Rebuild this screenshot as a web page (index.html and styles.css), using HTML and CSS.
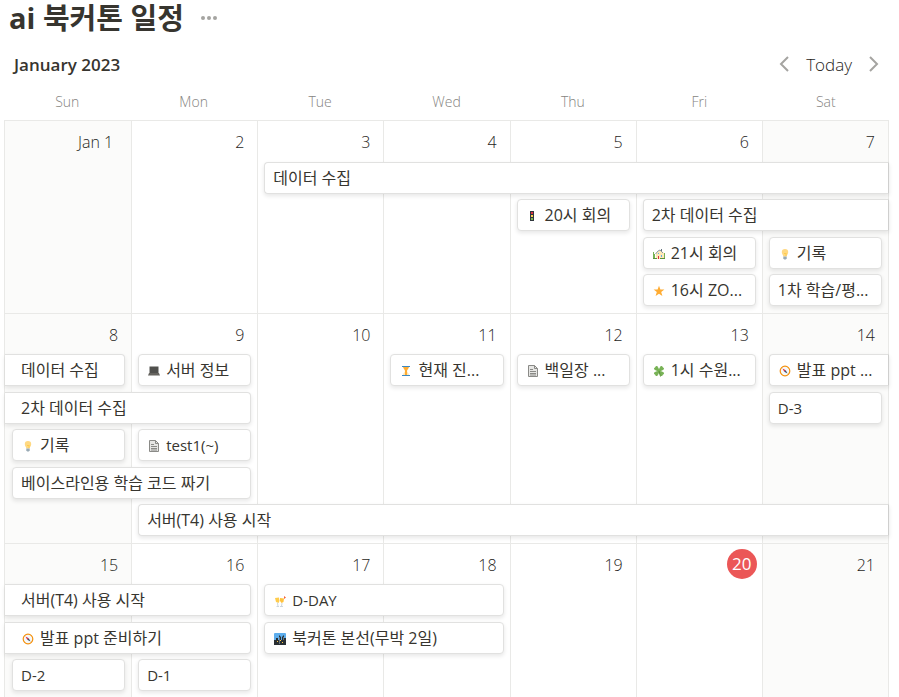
FILE: index.html
```html
<!DOCTYPE html>
<html lang="ko">
<head>
    <meta charset="UTF-8">
    <meta name="viewport" content="width=device-width, initial-scale=1.0">
    <title>ai 북커톤 일정</title>
    <link rel="stylesheet" href="styles.css">
</head>
<body>
    <!-- card icons -->
    <svg class="sprite" aria-hidden="true">
        <symbol id="light" viewBox="0 0 12 12">
            <rect x="3" y="1" width="4" height="10" fill="#31373d"/>
            <rect x="4" y="2" width="2" height="2" fill="#dd2e44"/>
            <rect x="4" y="5" width="2" height="2" fill="#ffcc4d"/>
            <rect x="4" y="8" width="2" height="2" fill="#77b255"/>
        </symbol>
        <symbol id="house" viewBox="0 0 12 12">
            <path d="M3 11V5l4-3 4 3v6z" fill="#ffe8b6"/>
            <path d="M2.5 6L5 3l2-1 3 3" fill="none" stroke="#8b9aa3"/>
            <path d="M0 4h1v2h1v4H0zM11 5h1v5h-1z" fill="#77b255"/>
            <rect x="8" y="1" width="1" height="2" fill="#66757f"/>
            <rect x="5" y="8" width="1" height="3" fill="#dd2e44"/>
            <rect x="8" y="7" width="1" height="2" fill="#5dadec"/>
            <rect x="5" y="5" width="1" height="1" fill="#5dadec"/>
            <path d="M0 10h4v1H0zM7 10h5v1H7z" fill="#5c913b"/>
        </symbol>
        <symbol id="star" viewBox="0 0 12 12">
            <path d="M6 .8l1.400 3.800h4L8.200 7l1.200 4L6 8.700 2.600 11l1.200-4L.6 4.600h4z" fill="#ffac33"/>
        </symbol>
        <symbol id="bulb" viewBox="0 0 12 12">
            <path d="M6 1a3.200 3.200 0 0 1 3.200 3.300C9.200 6.200 7.800 6.800 7.700 8.500H4.300C4.200 6.800 2.800 6.200 2.800 4.300A3.200 3.200 0 0 1 6 1z" fill="#ffd983"/>
            <path d="M5 5l1 1 1-1v3" fill="none" stroke="#ffcc4d"/>
            <path d="M4.300 8.500h3.400v2l-.9 1H5.200l-.9-1z" fill="#99aab5"/>
        </symbol>
        <symbol id="laptop" viewBox="0 0 12 12">
            <path d="M1.500 1.500h9V8h-9z" fill="#50504d"/>
            <path d="M1 8h10l1 2.500H0z" fill="#66645f"/>
        </symbol>
        <symbol id="doc" viewBox="0 0 12 12">
            <path d="M1.500.5h6l3 3v8h-9z" fill="#e6e6e4" stroke="#8a8a87"/>
            <path d="M7.500.5v3h3M3 4.500h3M3 6.500h6M3 8.500h6M3 10h6" fill="none" stroke="#8a8a87"/>
        </symbol>
        <symbol id="hourglass" viewBox="0 0 12 12">
            <path d="M3 2h6c0 2-2 3-2 4s2 2 2 4H3c0-2 2-3 2-4S3 4 3 2z" fill="#ffe8b6"/>
            <path d="M3 2h6L7 5.500V10H5V5.500z" fill="#ffac33"/>
            <path d="M2 1h8v1H2zM2 10h8v1H2z" fill="#3b88c3"/>
        </symbol>
        <symbol id="clover" viewBox="0 0 12 12">
            <path d="M6 6C5 4 3 .5 5.500 1L6 2l.5-1C9 .5 7 4 6 6c2-1 5.500-3 5-.5L10 6l1 .5C11.500 9 8 7 6 6c1 2 3 5.500.5 5L6 10l-.5 1C3 11.500 5 8 6 6 4 7 .5 9 1 6.500L2 6l-1-.5C.5 3 4 5 6 6z" fill="#77b255" stroke="#77b255" transform="rotate(45 6 6)"/>
            <path d="M6 6l1.500 5.500" stroke="#5c913b"/>
        </symbol>
        <symbol id="compass" viewBox="0 0 12 12">
            <circle cx="6" cy="6" r="4.800" fill="#f5f8fa" stroke="#f4900c" stroke-width="1.200"/>
            <path d="M3.500 3.500l3.300 1.700-1.600 1.600z" fill="#dd2e44"/>
            <path d="M8.500 8.500L5.200 6.800l1.600-1.600z" fill="#3b4f66"/>
        </symbol>
        <symbol id="glasses" viewBox="0 0 12 12">
            <path d="M1 3l4-.5.5 3.500-1 2L2 7z" fill="#ffcc4d"/>
            <path d="M6 3l4 .5-.5 3.500-2 1L6 6z" fill="#ffc23d"/>
            <path d="M3.500 7.500l.5 4M2.500 11.500H5M8 8l-.5 3.500M6 11.500h3" fill="none" stroke="#ccd6dd"/>
            <path d="M10 1l2 1.500L10 4z" fill="#f4633a"/>
        </symbol>
        <symbol id="city" viewBox="0 0 12 12">
            <rect x="0" y="0" width="12" height="12" rx="1" fill="#5dadec"/>
            <path d="M0 11V7h2V5h2v2h1V2l2 2v3h1V4l2-2v3h2v7H0z" fill="#292f33"/>
            <path d="M5 4h1v7H5zM9 4h1v3H9z" fill="#66757f"/>
            <path d="M3 8h1v1H3zM6 7h1v1H6zM8 9h1v1H8z" fill="#ffcc4d"/>
        </symbol>
    </svg>

    <h1>ai 북커톤 일정 <button type="button" class="more" aria-label="More"><svg viewBox="0 0 18 6"><circle cx="3" cy="3" r="2"/><circle cx="9" cy="3" r="2"/><circle cx="15" cy="3" r="2"/></svg></button></h1>

    <div class="toolbar">
        <h2>January 2023</h2>
        <button type="button" class="arrow" aria-label="Previous month"><svg viewBox="0 0 10 16"><path d="M9 1L2 8l7 7"/></svg></button>
        <button type="button" class="today-btn">Today</button>
        <button type="button" class="arrow" aria-label="Next month"><svg viewBox="0 0 10 16"><path d="M1 1l7 7-7 7"/></svg></button>
    </div>

    <div class="weekdays">
        <span>Sun</span><span>Mon</span><span>Tue</span><span>Wed</span><span>Thu</span><span>Fri</span><span>Sat</span>
    </div>

    <div class="calendar">
        <div class="week week1">
            <div class="day d1 weekend month-start"><time>Jan 1</time></div>
            <div class="day d2"><time>2</time></div>
            <div class="day d3"><time>3</time></div>
            <div class="day d4"><time>4</time></div>
            <div class="day d5"><time>5</time></div>
            <div class="day d6"><time>6</time></div>
            <div class="day d7 weekend"><time>7</time></div>
            <a href="#" class="card r1 d3 span5 to-next">데이터 수집</a>
            <a href="#" class="card r2 d5"><svg><use href="#light"/></svg>20시 회의</a>
            <a href="#" class="card r2 d6 span2 to-next">2차 데이터 수집</a>
            <a href="#" class="card r3 d6"><svg><use href="#house"/></svg>21시 회의</a>
            <a href="#" class="card r3 d7"><svg><use href="#bulb"/></svg>기록</a>
            <a href="#" class="card r4 d6"><svg><use href="#star"/></svg>16시 ZO...</a>
            <a href="#" class="card r4 d7">1차 학습/평...</a>
        </div>

        <div class="week week2">
            <div class="day d1 weekend"><time>8</time></div>
            <div class="day d2"><time>9</time></div>
            <div class="day d3"><time>10</time></div>
            <div class="day d4"><time>11</time></div>
            <div class="day d5"><time>12</time></div>
            <div class="day d6"><time>13</time></div>
            <div class="day d7 weekend"><time>14</time></div>
            <a href="#" class="card r1 d1 from-prev">데이터 수집</a>
            <a href="#" class="card r1 d2"><svg><use href="#laptop"/></svg>서버 정보</a>
            <a href="#" class="card r1 d4"><svg><use href="#hourglass"/></svg>현재 진...</a>
            <a href="#" class="card r1 d5"><svg><use href="#doc"/></svg>백일장 ...</a>
            <a href="#" class="card r1 d6"><svg><use href="#clover"/></svg>1시 수원...</a>
            <a href="#" class="card r1 d7 to-next"><svg><use href="#compass"/></svg>발표 ppt ...</a>
            <a href="#" class="card r2 d1 span2 from-prev">2차 데이터 수집</a>
            <a href="#" class="card r2 d7 latin">D-3</a>
            <a href="#" class="card r3 d1"><svg><use href="#bulb"/></svg>기록</a>
            <a href="#" class="card r3 d2 latin"><svg><use href="#doc"/></svg>test1(~)</a>
            <a href="#" class="card r4 d1 span2">베이스라인용 학습 코드 짜기</a>
            <a href="#" class="card r5 d2 span6 to-next">서버(T4) 사용 시작</a>
        </div>

        <div class="week week3">
            <div class="day d1 weekend"><time>15</time></div>
            <div class="day d2"><time>16</time></div>
            <div class="day d3"><time>17</time></div>
            <div class="day d4"><time>18</time></div>
            <div class="day d5"><time>19</time></div>
            <div class="day d6 today"><time>20</time></div>
            <div class="day d7 weekend"><time>21</time></div>
            <a href="#" class="card r1 d1 span2 from-prev">서버(T4) 사용 시작</a>
            <a href="#" class="card r1 d3 span2 latin"><svg><use href="#glasses"/></svg>D-DAY</a>
            <a href="#" class="card r2 d1 span2 from-prev"><svg><use href="#compass"/></svg>발표 ppt 준비하기</a>
            <a href="#" class="card r2 d3 span2"><svg><use href="#city"/></svg>북커톤 본선(무박 2일)</a>
            <a href="#" class="card r3 d1 latin">D-2</a>
            <a href="#" class="card r3 d2 latin">D-1</a>
        </div>
    </div>
</body>
</html>
```

FILE: styles.css
```css
* {
    box-sizing: border-box;
}
body {
    display: flex;
    flex-direction: column;
    min-height: 100vh;
    margin: 0;
    padding: 0 10px 0 4px;
    background-color: #fff;
    color: #37352f;
    font-family: "Open Sans", "Noto Sans CJK KR", sans-serif;
    font-size: 16px;
}
.sprite {
    display: none;
}
button {
    padding: 0;
    border: none;
    background: none;
    color: inherit;
    font: inherit;
    cursor: pointer;
}
h1 {
    display: flex;
    align-items: center;
    gap: 16px;
    height: 36px;
    margin: 0;
    padding-left: 5px;
    font-size: 29px;
    font-weight: 700;
    line-height: 36px;
}
.more {
    display: flex;
}
.more svg {
    width: 18px;
    height: 6px;
    fill: #a5a4a1;
}
.toolbar {
    display: flex;
    align-items: center;
    gap: 17px;
    height: 56px;
    padding: 0 10px;
}
.toolbar h2 {
    flex: 1;
    margin: 0;
    font-size: 17px;
    font-weight: 600;
}
.today-btn {
    color: #1f1e1b;
    font-size: 17px;
    font-weight: 300;
}
.arrow {
    display: flex;
}
.arrow svg {
    width: 10px;
    height: 16px;
    fill: none;
    stroke: #a5a4a1;
    stroke-width: 2;
}
.weekdays {
    display: grid;
    grid-template-columns: repeat(7, 1fr);
    height: 28px;
    color: #858481;
    font-size: 14px;
    font-weight: 300;
    line-height: 20px;
    text-align: center;
}

/* calendar */
.calendar {
    display: flex;
    flex: 1;
    flex-direction: column;
    border: 1px solid #e9e9e7;
    border-width: 0 1px;
}
.week {
    display: grid;
    grid-template-columns: repeat(7, minmax(0, 1fr));
    border-top: 1px solid #e9e9e7;
}
.week1 {
    grid-template-rows: 41px 37px 38px 37px 39px;
}
.week2 {
    grid-template-rows: 40px 38px 37px 38px 37px 39px;
}
.week3 {
    flex: 1;
    grid-template-rows: 40px 38px 37px 1fr;
}
.day {
    grid-row: 1 / -1;
    padding: 6px 13px 0 0;
    border-left: 1px solid #e9e9e7;
    color: #1f1e1b;
    font-weight: 300;
    line-height: 30px;
    text-align: right;
}
.day.d1 {
    border-left: none;
}
.day.weekend {
    background-color: #fbfbfa;
}
.day.month-start {
    padding-right: 18px;
}
.day.today {
    padding: 5px 5px 0 0;
}
.today time {
    display: inline-block;
    width: 30px;
    height: 30px;
    border-radius: 50%;
    background-color: #eb5757;
    color: #fff;
    font-size: 17px;
    font-weight: 400;
    text-align: center;
}

/* cards */
.card {
    display: flex;
    align-items: center;
    height: 32px;
    margin: 0 6px 0 7px;
    padding: 0 7px 1px 8px;
    border: 1px solid #e1e1e0;
    border-radius: 4px;
    background-color: #fff;
    box-shadow: 0 2px 4px rgba(15, 15, 15, 0.1);
    color: #37352f;
    font-weight: 400;
    line-height: 28px;
    text-decoration: none;
    white-space: nowrap;
}
.card.latin {
    font-size: 15px;
}
.card svg {
    flex: none;
    width: 12px;
    height: 12px;
    margin: 3px 6px 0 1px;
}
.card.to-next {
    margin-right: -1px;
    border-right-color: #cfcfce;
    border-radius: 4px 0 0 4px;
}
.card.from-prev {
    margin-left: 0;
    padding-left: 16px;
    border-left: none;
    border-radius: 0 4px 4px 0;
}

.d1 { grid-column-start: 1; }
.d2 { grid-column-start: 2; }
.d3 { grid-column-start: 3; }
.d4 { grid-column-start: 4; }
.d5 { grid-column-start: 5; }
.d6 { grid-column-start: 6; }
.d7 { grid-column-start: 7; }
.r1 { grid-row: 2; }
.r2 { grid-row: 3; }
.r3 { grid-row: 4; }
.r4 { grid-row: 5; }
.r5 { grid-row: 6; }
.span2 { grid-column-end: span 2; }
.span5 { grid-column-end: span 5; }
.span6 { grid-column-end: span 6; }
```
